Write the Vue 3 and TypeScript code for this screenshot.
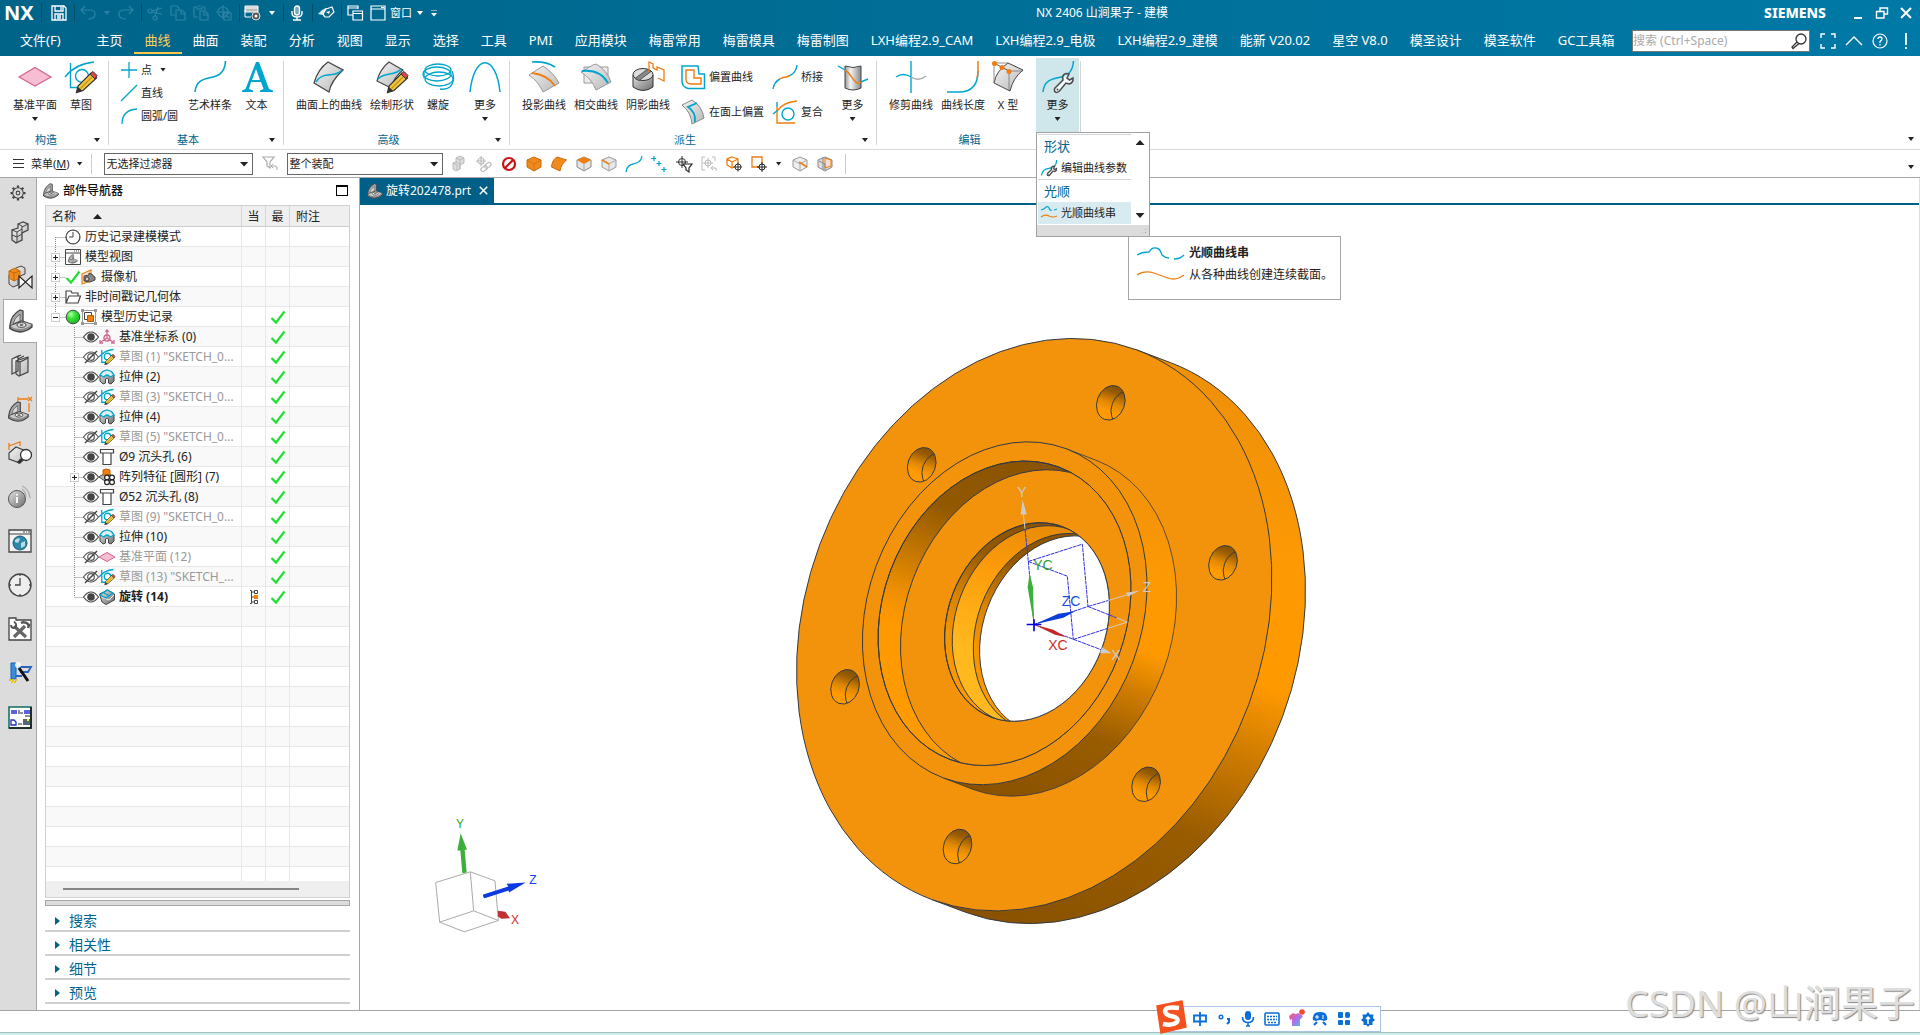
<script setup lang="ts">
import { ref } from 'vue'

interface Tool { icon: string; label: string; width: number; more?: boolean }
interface Row {
  level: number
  name: string
  icon: string
  state?: string
  expander?: '+' | '-'
  dim?: boolean
  bold?: boolean
  current?: boolean
  ok?: boolean
}

const tabs = ['主页', '曲线', '曲面', '装配', '分析', '视图', '显示', '选择', '工具', 'PMI', '应用模块', '梅雷常用', '梅雷模具', '梅雷制图', 'LXH编程2.9_CAM', 'LXH编程2.9_电极', 'LXH编程2.9_建模', '能新 V20.02', '星空 V8.0', '模圣设计', '模圣软件', 'GC工具箱']
const activeTab = ref('曲线')
const query = ref('')

const pencil = '<path d="M11.500 31.500L13 25L26 12L31.500 17L18 29.500Z" fill="#f2c53d" stroke="#333" stroke-width="1.200"/><path d="M15.500 27.500L28.500 14.500" stroke="#c8951c" stroke-width="1.500"/><path d="M25 13L28 10.500L32 14.500L30 18Z" fill="#e0474c" stroke="#333"/><path d="M11.500 31.500L13 26L17.500 30Z" fill="#333"/>'
const wrench = '<path d="M13 27L21 19Q19.500 14 24 12.500L27 13L25 17L27.500 19L31 17Q31.500 22 27 23L24 22L17 30.500Q14 32.500 12.500 30Q12 28.500 13 27Z" fill="#fff" fill-opacity=".7" stroke="#4a4a4a" stroke-width="1.500"/><circle cx="15.500" cy="28.500" r="1" fill="#4a4a4a"/>'
const sketch = '<path d="M0 16Q10 3 29 1M5.500 2V26.500H13" fill="none" stroke="#00a5cf" stroke-width="1.400"/><circle cx="17" cy="15" r="6.500" fill="none" stroke="#00a5cf" stroke-width="1.400"/>'
const sheet = '<path d="M15 1L30 9Q18 20 16 31L1 22Q5 8 15 1Z" fill="url(#metal)" stroke="#444" stroke-width="1.300"/>'
const bracket = '<path d="M1 16Q2 6 11 1L14 2V13L6 16L1 19Z" fill="#a8a8a8" stroke="#444" stroke-width="1.300"/><path d="M4 15Q5 9 11 5V12Z" fill="#d8d8d8" stroke="#666"/><path d="M1 17L13 12L23 15.500V18Q17 23 11 23Q4 22 1 19.500Z" fill="#8a8a8a" stroke="#444" stroke-width="1.300"/><path d="M1.500 17L13 12.500L22.500 15.500Q17 20 11 20Q5 20 1.500 17Z" fill="#c9c9c9"/><ellipse cx="12.500" cy="16" rx="4.500" ry="2.300" fill="#e8e8e8" stroke="#444"/><ellipse cx="12.500" cy="16" rx="2" ry="1" fill="#666"/>'
const cube = '<path d="M8 1L15 4V11L8 15L1 11V4Z"'

const icons: Record<string, [number, string]> = {
  save: [16, '<path d="M1 1H13L15 3V15H1ZM4 1V6H12V1M10 2V5M4 15V9H12V15M6 11H10M6 13H10" fill="none" stroke="#fff" stroke-width="1.300"/>'],
  undo: [16, '<path d="M5 1L1 5L5 9M1 5H10Q15 5 15 9Q15 13 10 14H8" fill="none" stroke="#2d83a4" stroke-width="1.200"/>'],
  redo: [16, '<path d="M11 1L15 5L11 9M15 5H6Q1 5 1 9Q1 13 6 14H8" fill="none" stroke="#2d83a4" stroke-width="1.200"/>'],
  cut: [16, '<g fill="none" stroke="#2d83a4" stroke-width="1.200"><circle cx="3" cy="6" r="2"/><circle cx="8" cy="13" r="2"/><path d="M5 7L15 9M8 11L11 2M5 6L15 3"/></g>'],
  copy: [16, '<g fill="none" stroke="#2d83a4" stroke-width="1.200"><path d="M5 10H1V1H7L9 3V5"/><path d="M6 5H12L15 8V15H6ZM11 5V9H15"/></g>'],
  paste: [16, '<g fill="none" stroke="#2d83a4" stroke-width="1.200"><path d="M5 12H1V2H4V4H9V2H12V5M5 1H8"/><path d="M7 6H12L15 9V15H7ZM11 6V10H15"/></g>'],
  target: [16, '<g fill="none" stroke="#2d83a4" stroke-width="1.200"><circle cx="7" cy="7" r="5"/><path d="M7 0V14M0 7H14M8 8H15V15H8ZM10 10L13 13"/></g>'],
  wingear: [16, '<path d="M0 1H13V7H0Z" fill="#bbb" stroke="#fff"/><path d="M0 3H13M0 5V12H6" stroke="#fff" fill="none"/><circle cx="11" cy="11" r="4" fill="#555" stroke="#ddd"/><circle cx="11" cy="11" r="1.500" fill="#fff"/>'],
  mic: [16, '<g fill="none" stroke="#fff" stroke-width="1.400"><rect x="5.500" y="1" width="5" height="9" rx="2.500" fill="#fff" fill-opacity=".45"/><path d="M3 6V8Q3 12 8 12Q13 12 13 8V6M8 12V15M4 15H12"/></g>'],
  hand: [16, '<path d="M0 9L4 5L8 3L11 5L9 9L6 12L5 10Z" fill="#fff" fill-opacity=".85"/><path d="M8 4L14 2L16 7L11 12H7L5 9Z" fill="#0a6a90" stroke="#fff" stroke-width="1.200"/><path d="M8 7L12 6L11 9Z" fill="#fff"/>'],
  windows: [16, '<g fill="none" stroke="#fff" stroke-width="1.200"><path d="M6 10H1V1H11V4M1 3H11M6 6H15.500V15H6ZM6 8.500H15.500"/></g>'],
  window: [16, '<path d="M1 1H15V15H1ZM1 4H15M11 2.500H14" fill="none" stroke="#fff" stroke-width="1.200"/>'],
  search: [16, '<g fill="none" stroke="#333" stroke-width="1.300"><circle cx="10" cy="6" r="5"/><path d="M6 9L1 14L2 15.500L8 10.500"/></g>'],
  full: [16, '<path d="M1 5V1H5M11 1H15V5M15 11V15H11M5 15H1V11" fill="none" stroke="#fff" stroke-width="1.400"/>'],
  up: [16, '<path d="M0 12L8 4L16 12" fill="none" stroke="#fff" stroke-width="1.400"/>'],
  help: [16, '<circle cx="8" cy="8" r="7" fill="none" stroke="#fff" stroke-width="1.200"/><path d="M6 6Q6 4 8 4T10 6Q10 7 8 8.500V10M8 11V12.500" fill="none" stroke="#fff" stroke-width="1.300"/>'],
  bang: [16, '<path d="M8 0V12M8 14V16" stroke="#fff" stroke-width="1.800"/>'],
  min: [12, '<path d="M2 11H10" stroke="#fff" stroke-width="2"/>'],
  restore: [12, '<path d="M4 4V1H11.500V7H8M0.500 4.500H8V11H0.500Z" fill="none" stroke="#fff" stroke-width="1.400"/>'],
  close: [12, '<path d="M1 1L11 11M11 1L1 11" stroke="#fff" stroke-width="2"/>'],

  plane: [32, '<path d="M0 16L16 6.500L32 16L16 25Z" fill="#f6bdd3" stroke="#d2648f" stroke-width="1.200"/>'],
  sketch: [32, sketch + pencil],
  point: [16, '<path d="M8 0V16M0 8H16" stroke="#00a5cf" stroke-width="1.300"/>'],
  line: [16, '<path d="M0 16L16 0" stroke="#00a5cf" stroke-width="1.300"/>'],
  arc: [16, '<path d="M1 16Q1 2 16 1" fill="none" stroke="#00a5cf" stroke-width="1.300"/>'],
  spline: [32, '<path d="M1 31C3 8 30 26 31.500 0" fill="none" stroke="#00a5cf" stroke-width="1.600"/>'],
  letter: [32, '<path d="M15 1H18L28 28L32 29.500V31H19V29.500L22.500 28L20 21H10L8 28L12 29.500V31H1V29.500L4.500 28ZM15 8L11 19H19Z" fill="#00a5cf"/>'],
  curveon: [32, sheet + '<path d="M3 21C10 9 22 18 29 9" fill="none" stroke="#00a5cf" stroke-width="1.500"/>'],
  shape: [32, '<path d="M13 1L27 9Q18 16 15 27L1 20Q4 8 13 1Z" fill="url(#metal)" stroke="#444" stroke-width="1.200"/><path d="M2 18C10 10 18 16 25 8" fill="none" stroke="#00a5cf" stroke-width="1.400"/>' + pencil],
  helix: [32, '<g fill="none" stroke="#00a5cf" stroke-width="1.300"><ellipse cx="16" cy="9" rx="13" ry="6"/><ellipse cx="15" cy="13" rx="14" ry="7"/><ellipse cx="17" cy="18" rx="14" ry="7"/><path d="M30 10Q34 20 28 26Q24 29 18 28M2 10V17"/></g>'],
  arch: [32, '<path d="M1 31C5 -8 27 -8 31 31" fill="none" stroke="#00a5cf" stroke-width="1.500"/>'],
  project: [32, '<path d="M15 5L1 14Q10 20 15 31L31 22Q26 12 15 5Z" fill="url(#metal)" stroke="#999"/><path d="M4 1Q18 0 27 6" fill="none" stroke="#00a5cf" stroke-width="1.600"/><path d="M4 12Q20 14 27 25" fill="none" stroke="#ef7d10" stroke-width="1.800"/>'],
  intersect: [32, '<path d="M4 6H28V22H4Z" fill="#eee" stroke="#999"/><path d="M13 4L1 11Q12 18 16 29L31 21Q27 9 16 3Z" fill="url(#metal)" stroke="#999"/><path d="M2 10Q20 8 28 22" fill="none" stroke="#00a5cf" stroke-width="1.800"/>'],
  shadow: [32, '<path d="M1 14V26Q11 33 21 26V14Z" fill="url(#metalDark)" stroke="#333"/><ellipse cx="11" cy="13.500" rx="10" ry="6" fill="#ddd" stroke="#333"/><path d="M3 17.500L15 8.500L19 10.500L7 19.500Z" fill="#888" stroke="#444" stroke-width=".8"/><path d="M17 11V1L21 3V7L25 9V6L32 9V20L26 17" fill="none" stroke="#ef7d10" stroke-width="1.300"/>'],
  offset: [24, '<path d="M1 1H17L18 9H23.500V23.500H7Q1 22 1 16Z" fill="none" stroke="#00a5cf" stroke-width="1.500"/><path d="M5 5H13V13H20V19H10Q5 19 5 14Z" fill="none" stroke="#ef7d10" stroke-width="1.400"/>'],
  faceoff: [24, '<path d="M1 5L11 0Q21 6 23 18L11 24Q10 12 1 5Z" fill="url(#metal)" stroke="#888"/><path d="M16 3L7 7Q15 12 14 22" fill="none" stroke="#00a5cf" stroke-width="1.800"/>'],
  bridge: [24, '<path d="M0 24Q1 17 7 14" fill="none" stroke="#00a5cf" stroke-width="1.400"/><path d="M7 14Q10 12 13 12Q15 11.500 17 10.500" fill="none" stroke="#ef7d10" stroke-width="1.400"/><path d="M17 10.500Q23 8 24 0" fill="none" stroke="#00a5cf" stroke-width="1.400"/>'],
  composite: [24, '<path d="M4 7V23H22" fill="none" stroke="#ef7d10" stroke-width="1.400"/><path d="M5 10Q11 2 24 1" fill="none" stroke="#ef7d10" stroke-width="1.400"/><path d="M4 2V7M0 14L5 10" stroke="#00a5cf" stroke-width="1.400"/><circle cx="15" cy="14" r="6" fill="none" stroke="#00a5cf" stroke-width="1.400"/>'],
  cylinder: [32, '<path d="M8 5V27Q16 31 24 27V5Q16 8 8 5Z" fill="url(#metalSide)" stroke="#444"/><path d="M1 5L8 9" stroke="#00a5cf" stroke-width="1.400"/><path d="M8 9C15 13 18 26 24 21" fill="none" stroke="#ef7d10" stroke-width="1.500"/><path d="M24 21L31 18" stroke="#00a5cf" stroke-width="1.400"/>'],
  trim: [32, '<path d="M16 0V32M1 16Q8 11 16 16" fill="none" stroke="#00a5cf" stroke-width="1.400"/><path d="M16 16Q24 21 31 15" fill="none" stroke="#aaa" stroke-width="1.400"/>'],
  length: [32, '<path d="M31 10Q31 31 12 31H0" fill="none" stroke="#00a5cf" stroke-width="1.500"/><path d="M31 0V10Q31 14 30 17" fill="none" stroke="#ef7d10" stroke-width="1.500"/>'],
  xform: [32, '<path d="M16 2L31 9Q21 17 18 30L2 22Q4 10 16 2Z" fill="url(#metal)" stroke="#444"/><path d="M2 2V22M17 10V29M17 10H31M2 2H16" fill="none" stroke="#777" stroke-width=".8"/><path d="M2 2L17 10" stroke="#555"/><circle cx="2.500" cy="2.500" r="2.500" fill="#ef7d10"/><circle cx="10" cy="6.500" r="2.500" fill="#ef7d10"/><circle cx="17" cy="10.500" r="2.500" fill="#ef7d10"/>'],
  curvewrench: [32, '<path d="M1 31C3 8 30 26 31.500 0" fill="none" stroke="#00a5cf" stroke-width="1.500"/>' + wrench],
  smooth: [16, '<path d="M0 5Q4 4 5 2Q7 1 8 3Q9 6 11 5M13 5L16 4" fill="none" stroke="#00a5cf" stroke-width="1.200"/><path d="M0 12Q4 9 8 11T16 11" fill="none" stroke="#ef7d10" stroke-width="1.200"/>'],

  filter: [16, '<path d="M1 1H12L8 6V12L5 10V6Z" fill="none" stroke="#aaa" stroke-width="1.200"/><path d="M11 8L9 10L11 12M9 10H13Q16 10 15 14" fill="none" stroke="#aaa"/>'],
  blocks: [16, '<path d="M5 2L9 0L13 2V7L9 9V13L5 15L2 13V7L5 6Z" fill="#ddd" stroke="#bbb"/><path d="M5 6L9 8V13M2 7L6 9V14M5 2L9 4L13 2M9 4V8" fill="none" stroke="#bbb"/>'],
  chain: [16, '<g fill="none" stroke="#bbb" stroke-width="1.200"><circle cx="5" cy="5" r="3"/><path d="M5 0V10M0 5H10"/><g transform="rotate(-40 10 11)"><rect x="4" y="9" width="7" height="4" rx="2"/><rect x="9" y="9" width="7" height="4" rx="2"/></g></g>'],
  no: [16, '<circle cx="8" cy="8" r="6" fill="#fff" stroke="#cc1010" stroke-width="2.200"/><path d="M4 12L12 4" stroke="#cc1010" stroke-width="2.200"/>'],
  solid: [16, cube + ' fill="#f08a1d" stroke="#c96a0a"/><path d="M1 4L8 8L15 4M8 8V15" fill="none" stroke="#d87410"/>'],
  face: [16, '<path d="M6 1L15.500 4Q10 8 9 15L.500 11Q1 4 6 1Z" fill="#f08a1d" stroke="#c96a0a"/>'],
  topface: [16, cube + ' fill="#e4e4e4" stroke="#888"/><path d="M8 1L15 4L8 8L1 4Z" fill="#ee7d12"/><path d="M8 8V15" stroke="#aaa"/>'],
  edge: [16, cube + ' fill="#e8e8e8" stroke="#999"/><path d="M8 8V15M8 8L15 4" stroke="#aaa"/><path d="M1 4L8 8" stroke="#ee7d12" stroke-width="1.500"/>'],
  curve: [16, '<path d="M0 16C2 3 14 12 16 0" fill="none" stroke="#00a5cf" stroke-width="1.300"/>'],
  points: [16, '<path d="M3 0V5M0 2.500H5M8 5V10M5.500 7.500H10.500M13 11V16M10.500 13.500H15.500" stroke="#00a5cf" stroke-width="1.200"/>'],
  snapfilter: [16, '<circle cx="6" cy="6" r="3.500" fill="none" stroke="#333"/><path d="M6 0V12M0 6H12" stroke="#333"/><path d="M7 8H16L13 12V16L10 14V12Z" fill="#fff" stroke="#222" stroke-width="1.200"/>'],
  snapoff: [16, '<g fill="none" stroke="#bbb"><path d="M4 1H1V14H4M11 1H14V5M12 10L10 12L12 14M10 12H15V15"/><circle cx="7" cy="7" r="3"/><path d="M7 2V12M2 7H12"/></g>'],
  cubesnap: [16, '<path d="M6 1L12 3V9L6 12L1 9V3ZM1 3L6 6L12 3M6 6V12" fill="none" stroke="#ef7d10" stroke-width="1.300"/><circle cx="12" cy="11" r="3" fill="#fff" stroke="#333"/><path d="M12 6.500V15.500M7.500 11H16" stroke="#333"/>'],
  boxsnap: [16, '<path d="M1 1H11V11H1Z" fill="none" stroke="#ef7d10" stroke-width="1.300"/><circle cx="11" cy="11" r="3" fill="#fff" stroke="#222"/><path d="M11 6V16M6 11H16" stroke="#222"/>'],
  seam: [16, cube + ' fill="#eee" stroke="#999"/><path d="M1 4L8 8L15 4M8 8V15" fill="none" stroke="#aaa"/><path d="M7 6L15 11" stroke="#ef7d10" stroke-width="1.500"/>'],
  section: [16, cube + ' fill="#ddd" stroke="#888"/><path d="M6 1V14" stroke="#888"/><path d="M8 2V12L14 10V4Z" fill="#f3e0cc" stroke="#ef7d10"/><path d="M2 5L8 8V14" fill="none" stroke="#888"/>'],

  gear: [24, '<g fill="none" stroke="#444" stroke-width="1.400"><circle cx="12" cy="12" r="7"/><circle cx="12" cy="12" r="2.500"/><path d="M12 2V5M12 19V22M2 12H5M19 12H22M4.900 4.900L7 7M17 17L19.100 19.100M19.100 4.900L17 7M7 17L4.900 19.100" stroke-width="3"/></g>'],
  assembly: [24, '<path d="M10 3L15 1L20 3V9L14 12V19L8 22L4 19V9L10 7Z" fill="url(#metal)" stroke="#444" stroke-width="1.300"/><path d="M4 9L9 11L14 8M14 6L20 3M9 11V22M4 14L9 16L14 13M10 3L14 5V12" fill="none" stroke="#444"/>'],
  constraint: [24, '<path d="M8 3L13 1L17 3V9L10 12V20L5 22L1 19V10Z" fill="url(#metal)" stroke="#444"/><path d="M1 6L7 3L12 6V13L6 16L1 13Z" fill="#ef8a1d" stroke="#c46808"/><path d="M1 6L6 8L12 6M6 8V16" fill="none" stroke="#c46808"/><path d="M11 11V23L24 11V23Z" fill="#fff" stroke="#222" stroke-width="1.200"/>'],
  part: [24, bracket],
  library: [24, '<path d="M4 6L10 3V18L4 21ZM4 6L13 2M10 6L16 3M8 8L20 4V19L11 23L8 21Z" fill="url(#metal)" stroke="#444" stroke-width="1.200"/><path d="M8 8L12 9L20 5M12 9V22" fill="none" stroke="#444" stroke-width="1.200"/>'],
  dims: [24, '<g transform="translate(0 4) scale(.88)">' + bracket + '</g><path d="M10 2H20M10 0V4M20 0L24 4M24 0L20 4M21 6V15" stroke="#ef7d10" stroke-width="1.300"/>'],
  inspect: [24, '<path d="M1 12L8 6L23 12L12 22L1 18Z" fill="url(#metal)" stroke="#444" stroke-width="1.200"/><path d="M1 2V9M1 5L12 1V5" fill="none" stroke="#ef7d10" stroke-width="1.300"/><circle cx="18" cy="14" r="5.500" fill="#fff" stroke="#333" stroke-width="1.300"/><path d="M14 18L10 22" stroke="#333" stroke-width="3"/>'],
  info: [24, '<circle cx="9" cy="14" r="8.500" fill="url(#metalDark)" stroke="#555"/><path d="M9 12V18M9 9V10.500" stroke="#fff" stroke-width="1.800"/><path d="M14 4Q18 7 18 12M14 1Q21 4 22 13" fill="none" stroke="#aaa" stroke-width="1.300"/>'],
  web: [24, '<path d="M1 1H23V23H1Z" fill="#f4f4f4" stroke="#444" stroke-width="1.300"/><path d="M1 5H23" stroke="#444"/><path d="M15 3H17M18 3H19M20 3H22" stroke="#444"/><circle cx="12" cy="14" r="7" fill="#2f87a8" stroke="#1b5d78"/><path d="M7 11Q10 8 12 10L10 14L7 13ZM13 14L17 12V17L13 19Z" fill="#b8dde8"/>'],
  clock: [24, '<circle cx="12" cy="12" r="11" fill="#eee" stroke="#444" stroke-width="1.400"/><path d="M12 5V12H7M12 1V3M12 21V23M1 12H3M21 12H23" fill="none" stroke="#444" stroke-width="1.300"/>'],
  tools: [24, '<path d="M2 1H8V3H23V23H1V1Z" fill="#fff" stroke="#444" stroke-width="1.300"/><path d="M6 9L18 20M17 9L6 20" stroke="#666" stroke-width="3.200"/><path d="M3 8Q3 11 6 11Q9 10 8 7L6 4.500" fill="none" stroke="#555" stroke-width="1.800"/><path d="M13 6Q17 4 21 8L20 11" fill="none" stroke="#555" stroke-width="2.500"/>'],
  wizard: [24, '<path d="M3 2H8V18H3Z" fill="#3a8fd8" stroke="#1a5eb0"/><path d="M10 6H23L20 11H12M8 15H14" fill="none" stroke="#2a62c0" stroke-width="1.800"/><path d="M11 7L20 20" stroke="#111" stroke-width="3"/><circle cx="10" cy="4" r="3" fill="#fff" fill-opacity=".8"/><path d="M1 19H10M3 21H8" stroke="#e8c020" stroke-width="1.800" stroke-dasharray="2 1"/>'],
  flow: [24, '<path d="M1 2H23V23H1Z" fill="#fff" stroke="#0d6b62" stroke-width="1.500"/><path d="M23 2V23H1" fill="none" stroke="#111" stroke-width="1.500"/><path d="M3 5H9V9H3ZM16 5H22V9H16Z" fill="#5a63e0"/><path d="M3 15H6L8 17V20H3Z" fill="#fff" stroke="#2030c0" stroke-width="1.300"/><path d="M15 14H22V20H15Z" fill="#567"/><path d="M19 14H21V16H19Z" fill="#ee3"/><path d="M10 6H12M10 8H15M10 19H14M17 11H22" stroke="#222"/>'],

  tclock: [16, '<circle cx="8" cy="8" r="7" fill="#fff" stroke="#444" stroke-width="1.200"/><path d="M8 3V8H4M8 1V2M8 14V15M14 8H15M1 8H2" fill="none" stroke="#444"/>'],
  tview: [16, '<path d="M.500 .500H15.500V15.500H.500ZM.500 4H15.500" fill="#fff" stroke="#444"/><path d="M9 2H10M11 2H12M13 2H14" stroke="#444"/><g transform="translate(3 5) scale(.4)">' + bracket + '</g>'],
  tcamera: [16, '<path d="M1 5L10 1V12L1 15Z" fill="#f8e4cc" stroke="#ef7d10" stroke-width="1.200"/><path d="M3 7L8 6V4L12 6V7L14 8V11L9 13L3 12Z" fill="#888" stroke="#444"/><circle cx="6" cy="10" r="2" fill="#ccc" stroke="#444"/>'],
  tfolder: [16, '<path d="M1 14V2H6L7 4H13V7M1 14L4 7H15.500L13 14Z" fill="#fff" stroke="#444" stroke-width="1.200"/>'],
  thistory: [16, '<path d="M3 1.500H13M3 14.500H13M1.500 3V13M14.500 3V13" stroke="#999"/><path d="M0 0H3V3H0ZM13 0H16V3H13ZM0 13H3V16H0ZM13 13H16V16H13Z" fill="#999"/><path d="M3.500 3.500H10.500V10.500H3.500Z" fill="#fff" stroke="#444"/><path d="M6.500 6.500H12.500V12.500H6.500Z" fill="#ef8010" stroke="#b85c00"/>'],
  tcsys: [16, '<g fill="none" stroke="#d2648f" stroke-width="1.300"><path d="M8 1V9L2 13M8 9L14 13"/><circle cx="8" cy="9" r="3"/><path d="M6.500 3L8 1L9.500 3M1 11V14H4M15 11V14H12"/></g>'],
  tsketch: [32, sketch.split('1.400').join('2.600') + pencil],
  textrude: [16, '<path d="M1 6V12L4 15L6.500 14V10Q8 8 9.500 10V14L12 15L15 12V6L12 3H4Z" fill="url(#metalDark)" stroke="#444"/><path d="M1 6L3.500 2.500L8 1L12.500 2.500L15 6L11 8Q8 4 5 8Z" fill="#dff0f4" stroke="#00a5cf" stroke-width="1.300"/>'],
  thole: [16, '<path d="M1.500 .500H14.500V4H12V15.500H4V4H1.500ZM4 4H12" fill="#fff" stroke="#444" stroke-width="1.200"/>'],
  tpattern: [16, '<path d="M0 8Q4 4 12 6L15 9L9 14Z" fill="#bbb" stroke="#444"/><path d="M4 1Q7.500 -1 11 1V6H4Z" fill="#ef8010" stroke="#b85c00"/><g fill="#fff" stroke="#222" stroke-width="1.200"><circle cx="8" cy="8.500" r="2.400"/><circle cx="13" cy="8.500" r="2.400"/><circle cx="8" cy="13.300" r="2.400"/><circle cx="13" cy="13.300" r="2.400"/></g>'],
  tplane: [16, '<path d="M0 8L8 3.500L16 8L8 12.500Z" fill="#f6bdd3" stroke="#d2648f"/>'],
  trevolve: [16, '<path d="M.500 5L9 1L15.500 5V11L7 15.500L3 13Z" fill="url(#metalDark)" stroke="#444"/><path d="M3 8L10 11L15 6" fill="none" stroke="#eee"/><path d="M1 6L8 1L14 4L7 9ZM5 4L11 7" fill="none" stroke="#00a5cf" stroke-width="1.200"/>'],
  eye: [16, '<path d="M.500 8Q8 -2 15.500 8Q8 18 .500 8Z" fill="#fff" stroke="#444" stroke-width="1.200"/><circle cx="8" cy="8" r="3.800" fill="#444"/>'],
  eyeoff: [16, '<path d="M.500 8Q8 -2 15.500 8Q8 18 .500 8Z" fill="#fff" stroke="#555" stroke-width="1.200"/><circle cx="8" cy="8" r="3.300" fill="none" stroke="#555" stroke-width="1.200"/><path d="M2 14L14 2" stroke="#444" stroke-width="1.400"/>'],
  ok: [16, '<path d="M1.500 9L6 13.500L14.500 2.500" fill="none" stroke="#22dd33" stroke-width="2.200"/>'],
  ball: [16, '<circle cx="8" cy="8" r="6.800" fill="url(#ball)" stroke="#444"/>'],
  current: [16, '<path d="M5.500 1.500V14.500M5.500 3H8M5.500 8H8M5.500 13H8M5.500 1.500H4M5.500 14.500H4" stroke="#444" fill="none"/><path d="M8.500 1.500H11.500V4.500H8.500ZM8.500 11.500H11.500V14.500H8.500Z" fill="#fff" stroke="#444"/><path d="M8 6H12V10H8Z" fill="#ef8010"/>'],

  zh: [16, '<path d="M2 4.500H14V10.500H2ZM8 1V15" fill="none" stroke="#0a6fd6" stroke-width="1.800"/>'],
  punct: [16, '<circle cx="5" cy="6" r="1.800" fill="none" stroke="#0a6fd6" stroke-width="1.400"/><path d="M11 8H13V11L11 13" fill="none" stroke="#0a6fd6" stroke-width="2"/>'],
  imemic: [16, '<rect x="5" y="0" width="6" height="9" rx="3" fill="#0a6fd6"/><path d="M2.500 6Q2.500 11.500 8 11.500T13.500 6M8 12V15M6 15H10" fill="none" stroke="#0a6fd6" stroke-width="1.600"/>'],
  keys: [16, '<rect x="1" y="2" width="14" height="12" rx="1" fill="none" stroke="#0a6fd6" stroke-width="1.600"/><path d="M3 5.500H13M3 8.500H13M4 11.500H12" stroke="#0a6fd6" stroke-width="1.700" stroke-dasharray="2 1"/>'],
  shirt: [16, '<path d="M1 5L5 2Q8 4 10 2L15 5L13 8L12 8V15H4V8L2 9Z" fill="url(#shirt)"/><circle cx="14" cy="1" r="2.800" fill="#f5492e"/>'],
  game: [16, '<path d="M3 2Q8 0 13 2Q16 5 15 9L12 10Q8 8 4 10L1 9Q0 5 3 2Z" fill="#0a6fd6"/><path d="M5 4V8M3 6H7M10 5H12M10 7H12" stroke="#fff"/><path d="M2 14L5 11M14 14L11 11" stroke="#0a6fd6" stroke-width="2.200"/>'],
  grid: [16, '<g fill="#0a6fd6"><rect x="2" y="1" width="5" height="6" rx="1"/><rect x="9" y="1" width="5" height="6" rx="2"/><rect x="2" y="9" width="5" height="5" rx="1"/><rect x="9" y="9" width="5" height="5" rx="1"/></g>'],
  imegear: [16, '<path d="M8 1L10 3.500H13.500L13 7L15 9L12.500 11V14H9.500L8 16L6.500 14H3.500V11L1 9L3 7L2.500 3.500H6Z" fill="#0a6fd6"/><path d="M8 6V13M6 8L8 6L10 8" stroke="#fff" stroke-width="1.500" fill="none"/>'],
  sogou: [32, '<path d="M2 5L27 0L31 26L6 32Z" fill="#f4511e" stroke="#f4511e" stroke-width="1.500" stroke-linejoin="round"/><path d="M24 7Q10 5 10 10.500Q11 14.500 18 15.500Q24 17 22 21Q18 25 8 23" fill="none" stroke="#fff" stroke-width="4.500"/>'],
}

const quick = ['save', '|', 'undo', 'dim', 'redo', '|', 'cut', 'copy', 'paste', 'target', '|', 'wingear', 'v', '|', 'mic', '|', 'hand', '|', 'windows', 'window']

const baseTools: Tool[] = [
  { icon: 'plane', label: '基准平面', width: 54, more: true },
  { icon: 'sketch', label: '草图', width: 38 },
]
const basicList = [
  { icon: 'point', label: '点', more: true },
  { icon: 'line', label: '直线', more: false },
  { icon: 'arc', label: '圆弧/圆', more: false },
]
const basicTools: Tool[] = [
  { icon: 'spline', label: '艺术样条', width: 54 },
  { icon: 'letter', label: '文本', width: 39 },
]
const advTools: Tool[] = [
  { icon: 'curveon', label: '曲面上的曲线', width: 78 },
  { icon: 'shape', label: '绘制形状', width: 48 },
  { icon: 'helix', label: '螺旋', width: 44 },
  { icon: 'arch', label: '更多', width: 50, more: true },
]
const deriveTools: Tool[] = [
  { icon: 'project', label: '投影曲线', width: 52 },
  { icon: 'intersect', label: '相交曲线', width: 52 },
  { icon: 'shadow', label: '阴影曲线', width: 52 },
]
const editTools: Tool[] = [
  { icon: 'trim', label: '修剪曲线', width: 52 },
  { icon: 'length', label: '曲线长度', width: 52 },
  { icon: 'xform', label: 'X 型', width: 38 },
]

const selectTools = ['blocks', 'chain', 'no', 'solid', 'face', 'topface', 'edge', 'curve', 'points', 'snapfilter', 'snapoff', 'cubesnap', 'boxsnap']
const rail = ['gear', 'assembly', 'constraint', 'part', 'library', 'dims', 'inspect', 'info', 'web', 'clock', 'tools', 'wizard', 'flow']
const ime = ['zh', 'punct', 'imemic', 'keys', 'shirt', 'game', 'grid', 'imegear']
const sections = ['搜索', '相关性', '细节', '预览']

const rows: Row[] = [
  { level: 0, name: '历史记录建模模式', icon: 'tclock' },
  { level: 0, name: '模型视图', icon: 'tview', expander: '+' },
  { level: 0, name: '摄像机', icon: 'tcamera', state: 'ok', expander: '+' },
  { level: 0, name: '非时间戳记几何体', icon: 'tfolder', expander: '+' },
  { level: 0, name: '模型历史记录', icon: 'thistory', state: 'ball', expander: '-', ok: true },
  { level: 1, name: '基准坐标系 (0)', icon: 'tcsys', state: 'eye', ok: true },
  { level: 1, name: '草图 (1) "SKETCH_0...', icon: 'tsketch', state: 'eyeoff', dim: true, ok: true },
  { level: 1, name: '拉伸 (2)', icon: 'textrude', state: 'eye', ok: true },
  { level: 1, name: '草图 (3) "SKETCH_0...', icon: 'tsketch', state: 'eyeoff', dim: true, ok: true },
  { level: 1, name: '拉伸 (4)', icon: 'textrude', state: 'eye', ok: true },
  { level: 1, name: '草图 (5) "SKETCH_0...', icon: 'tsketch', state: 'eyeoff', dim: true, ok: true },
  { level: 1, name: 'Ø9 沉头孔 (6)', icon: 'thole', state: 'eye', ok: true },
  { level: 1, name: '阵列特征 [圆形] (7)', icon: 'tpattern', state: 'eye', expander: '+', ok: true },
  { level: 1, name: 'Ø52 沉头孔 (8)', icon: 'thole', state: 'eye', ok: true },
  { level: 1, name: '草图 (9) "SKETCH_0...', icon: 'tsketch', state: 'eyeoff', dim: true, ok: true },
  { level: 1, name: '拉伸 (10)', icon: 'textrude', state: 'eye', ok: true },
  { level: 1, name: '基准平面 (12)', icon: 'tplane', state: 'eyeoff', dim: true, ok: true },
  { level: 1, name: '草图 (13) "SKETCH_...', icon: 'tsketch', state: 'eyeoff', dim: true, ok: true },
  { level: 1, name: '旋转 (14)', icon: 'trevolve', state: 'eye', bold: true, current: true, ok: true },
]
const emptyRows = 14

// Dotted connector lines of one tree row.
function guide(i: number): string {
  const r = rows[i]
  const x = r.level ? 28.5 : 9.5
  const top = i === 0 ? 10 : 0
  const last = i === 4 || i === rows.length - 1
  return `M${x} ${top}V${last ? 10 : 20}M${x} 10.5H${r.level ? 38 : 20}`
}

// Every circle of the part lies across one shared axis, so they project to similar ellipses.
const TILT = 20.4
const RATIO = 0.7805
const ux = Math.cos((TILT * Math.PI) / 180)
const uy = Math.sin((TILT * Math.PI) / 180)
function ring(cx: number, cy: number, r: number): string {
  const x1 = cx + uy * r, y1 = cy - ux * r, x2 = cx - uy * r, y2 = cy + ux * r
  return `M${x1} ${y1}A${r * RATIO} ${r} ${TILT} 0 1 ${x2} ${y2}A${r * RATIO} ${r} ${TILT} 0 1 ${x1} ${y1}Z`
}
function barrel(cx: number, cy: number, r: number, dx: number, dy: number): string {
  const tx = cx + uy * r, ty = cy - ux * r, bx = cx - uy * r, by = cy + ux * r
  return `M${tx} ${ty}L${tx + dx} ${ty + dy}A${r * RATIO} ${r} ${TILT} 0 1 ${bx + dx} ${by + dy}L${bx} ${by}`
}
const holes = [[1110.8, 402.3], [921.7, 464.3], [1223, 562.3], [845.1, 686.3], [1146.1, 783.8], [957.5, 846]]
</script>

<template>
  <div class="app">
    <svg class="defs" aria-hidden="true">
      <defs>
        <linearGradient id="metal" x1="0" y1="0" x2="1" y2="1"><stop offset="0" stop-color="#f4f4f4" /><stop offset="1" stop-color="#b8b8b8" /></linearGradient>
        <linearGradient id="metalDark" x1="0" y1="0" x2="1" y2="1"><stop offset="0" stop-color="#e2e2e2" /><stop offset="1" stop-color="#6e6e6e" /></linearGradient>
        <linearGradient id="metalSide" x1="0" y1="0" x2="1" y2="0"><stop offset="0" stop-color="#999" /><stop offset=".35" stop-color="#f4f4f4" /><stop offset="1" stop-color="#888" /></linearGradient>
        <radialGradient id="ball" cx=".35" cy=".3" r=".8"><stop offset="0" stop-color="#b6ffb0" /><stop offset=".4" stop-color="#35e435" /><stop offset="1" stop-color="#14b020" /></radialGradient>
        <linearGradient id="shirt" x1="0" y1="0" x2="1" y2="1"><stop offset="0" stop-color="#ff5a5a" /><stop offset=".5" stop-color="#b06cf0" /><stop offset="1" stop-color="#38d0f0" /></linearGradient>
      </defs>
    </svg>

    <header class="head">
      <div class="titlebar">
        <span class="brand">NX</span>
        <i class="qsep first"></i>
        <template v-for="(q, i) in quick" :key="i">
          <i v-if="q === '|'" class="qsep"></i>
          <i v-else-if="q === 'v' || q === 'dim'" class="caret light" :class="{ faded: q === 'dim' }"></i>
          <button v-else class="ico" :aria-label="q"><svg width="16" height="16" viewBox="0 0 16 16" v-html="icons[q][1]" /></button>
        </template>
        <button class="winbtn">窗口<i class="caret light"></i></button>
        <i class="caret light lined"></i>
        <h1>NX 2406 山涧果子 - 建模</h1>
        <span class="maker">SIEMENS</span>
        <button v-for="w in ['min', 'restore', 'close']" :key="w" class="ico win" :aria-label="w"><svg width="12" height="12" viewBox="0 0 12 12" v-html="icons[w][1]" /></button>
      </div>
      <nav class="tabs">
        <button class="file">文件(F)</button>
        <button v-for="t in tabs" :key="t" :class="{ on: t === activeTab }" @click="activeTab = t">{{ t }}</button>
        <div class="right">
          <div class="search">
            <input v-model="query" type="text" aria-label="搜索" placeholder="搜索 (Ctrl+Space)" />
            <svg width="16" height="16" viewBox="0 0 16 16" v-html="icons.search[1]" />
          </div>
          <button v-for="w in ['full', 'up', 'help', 'bang']" :key="w" class="ico" :aria-label="w"><svg width="16" height="16" viewBox="0 0 16 16" v-html="icons[w][1]" /></button>
        </div>
      </nav>
    </header>

    <section class="ribbon">
      <div class="group g1">
        <div class="body">
          <button v-for="t in baseTools" :key="t.label" class="tool" :style="{ width: t.width + 'px' }">
            <svg width="32" height="32" viewBox="0 0 32 32" v-html="icons[t.icon][1]" /><span>{{ t.label }}</span><i v-if="t.more" class="caret"></i>
          </button>
        </div>
        <div class="gname">构造<i class="caret"></i></div>
      </div>
      <i class="gsep"></i>
      <div class="group g2">
        <div class="body">
          <div class="list small">
            <button v-for="t in basicList" :key="t.label"><svg width="16" height="16" viewBox="0 0 16 16" v-html="icons[t.icon][1]" />{{ t.label }}<i v-if="t.more" class="caret"></i></button>
          </div>
          <button v-for="t in basicTools" :key="t.label" class="tool" :style="{ width: t.width + 'px' }">
            <svg width="32" height="32" viewBox="0 0 32 32" v-html="icons[t.icon][1]" /><span>{{ t.label }}</span>
          </button>
        </div>
        <div class="gname">基本<i class="caret"></i></div>
      </div>
      <i class="gsep"></i>
      <div class="group g3">
        <div class="body">
          <button v-for="t in advTools" :key="t.label" class="tool" :style="{ width: t.width + 'px' }">
            <svg width="32" height="32" viewBox="0 0 32 32" v-html="icons[t.icon][1]" /><span>{{ t.label }}</span><i v-if="t.more" class="caret"></i>
          </button>
        </div>
        <div class="gname">高级<i class="caret"></i></div>
      </div>
      <i class="gsep"></i>
      <div class="group g4">
        <div class="body">
          <button v-for="t in deriveTools" :key="t.label" class="tool" :style="{ width: t.width + 'px' }">
            <svg width="32" height="32" viewBox="0 0 32 32" v-html="icons[t.icon][1]" /><span>{{ t.label }}</span>
          </button>
          <div class="list wide">
            <button><svg width="24" height="24" viewBox="0 0 24 24" v-html="icons.offset[1]" />偏置曲线</button>
            <button><svg width="24" height="24" viewBox="0 0 24 24" v-html="icons.faceoff[1]" />在面上偏置</button>
          </div>
          <div class="list narrow">
            <button><svg width="24" height="24" viewBox="0 0 24 24" v-html="icons.bridge[1]" />桥接</button>
            <button><svg width="24" height="24" viewBox="0 0 24 24" v-html="icons.composite[1]" />复合</button>
          </div>
          <button class="tool more"><svg width="32" height="32" viewBox="0 0 32 32" v-html="icons.cylinder[1]" /><span>更多</span><i class="caret"></i></button>
        </div>
        <div class="gname">派生<i class="caret"></i></div>
      </div>
      <i class="gsep"></i>
      <div class="group g5">
        <div class="body">
          <button v-for="t in editTools" :key="t.label" class="tool" :style="{ width: t.width + 'px' }">
            <svg width="32" height="32" viewBox="0 0 32 32" v-html="icons[t.icon][1]" /><span>{{ t.label }}</span>
          </button>
          <div class="opened">
            <button class="tool more" aria-expanded="true"><svg width="32" height="32" viewBox="0 0 32 32" v-html="icons.curvewrench[1]" /><span>更多</span><i class="caret"></i></button>
            <div class="menu">
              <div class="menubody">
                <div class="items">
                  <h2>形状</h2>
                  <button><svg width="16" height="16" viewBox="0 0 32 32" v-html="icons.curvewrench[1].split('1.500&quot;').join('2.500&quot;')" />编辑曲线参数</button>
                  <h2>光顺</h2>
                  <button class="hot"><svg width="16" height="16" viewBox="0 0 16 16" v-html="icons.smooth[1]" />光顺曲线串</button>
                </div>
                <div class="scroll"><i class="caret big flip"></i><i class="caret big"></i></div>
              </div>
              <div class="grip"></div>
              <div class="tip" role="tooltip">
                <svg width="48" height="36" viewBox="0 0 48 36">
                  <path d="M0 10Q5 7 12 7Q15 2 19 3Q23 3 25 10Q28 13 32 13M37 14Q43 14 47 10" fill="none" stroke="#00a5cf" stroke-width="1.300" />
                  <path d="M0 30Q7 25 17 28Q25 31 31 33Q39 36 47 30" fill="none" stroke="#ef7d10" stroke-width="1.300" />
                </svg>
                <div><b>光顺曲线串</b><p>从各种曲线创建连续截面。</p></div>
              </div>
            </div>
          </div>
        </div>
        <div class="gname">编辑</div>
      </div>
      <i class="gsep"></i>
      <i class="caret corner"></i>
    </section>

    <section class="bar">
      <button class="menubtn"><svg width="11" height="11" viewBox="0 0 11 11"><path d="M0 1.500H11M0 5.500H11M0 9.500H11" stroke="#333" /></svg><span>菜单(<u>M</u>)</span><i class="caret"></i></button>
      <i class="bsep"></i>
      <label class="pick p1"><select aria-label="选择过滤器"><option>无选择过滤器</option></select><i class="caret big"></i></label>
      <button class="ico" aria-label="filter"><svg width="16" height="16" viewBox="0 0 16 16" v-html="icons.filter[1]" /></button>
      <label class="pick p2"><select aria-label="选择范围"><option>整个装配</option></select><i class="caret big"></i></label>
      <button v-for="t in selectTools" :key="t" class="ico" :aria-label="t"><svg width="16" height="16" viewBox="0 0 16 16" v-html="icons[t][1]" /></button>
      <i class="caret"></i>
      <button class="ico gap" aria-label="seam"><svg width="16" height="16" viewBox="0 0 16 16" v-html="icons.seam[1]" /></button>
      <button class="ico" aria-label="section"><svg width="16" height="16" viewBox="0 0 16 16" v-html="icons.section[1]" /></button>
      <i class="bsep end"></i>
      <i class="caret corner"></i>
    </section>

    <main class="main">
      <nav class="rail">
        <button v-for="r in rail" :key="r" :class="{ on: r === 'part' }" :aria-label="r"><svg :width="r === 'gear' ? 18 : 24" :height="r === 'gear' ? 18 : 24" viewBox="0 0 24 24" v-html="icons[r][1]" /></button>
      </nav>

      <aside class="panel">
        <div class="ptitle"><svg width="16" height="16" viewBox="0 0 24 24" v-html="icons.part[1]" />部件导航器<button class="max" aria-label="最大化"></button></div>
        <div class="treebox">
          <div class="treeclip">
            <table class="tree">
              <colgroup><col class="c1" /><col class="c2" /><col class="c2" /><col /></colgroup>
              <thead><tr><th>名称<i class="caret big flip"></i></th><th class="mid">当</th><th class="mid">最</th><th>附注</th></tr></thead>
              <tbody>
                <tr v-for="(r, i) in rows" :key="i">
                  <td>
                    <div class="node" :class="{ dim: r.dim, bold: r.bold }">
                      <svg :width="r.level ? 37 : 19" height="20">
                        <path :d="guide(i)" fill="none" stroke="#888" stroke-dasharray="1 1" />
                        <g v-if="r.expander" :transform="r.level ? 'translate(24 6)' : 'translate(5 6)'">
                          <rect x=".5" y=".5" width="8" height="8" fill="#fff" stroke="#ccc" />
                          <path :d="r.expander === '+' ? 'M2 4.500H7M4.500 2V7' : 'M2 4.500H7'" stroke="#222" />
                        </g>
                      </svg>
                      <svg v-if="r.state" width="16" height="16" viewBox="0 0 16 16" v-html="icons[r.state][1]" />
                      <svg width="16" height="16" :viewBox="`0 0 ${icons[r.icon][0]} ${icons[r.icon][0]}`" v-html="icons[r.icon][1]" />
                      <span>{{ r.name }}</span>
                    </div>
                  </td>
                  <td class="mid"><svg v-if="r.current" width="16" height="16" viewBox="0 0 16 16" v-html="icons.current[1]" /></td>
                  <td class="mid"><svg v-if="r.ok" width="16" height="16" viewBox="0 0 16 16" v-html="icons.ok[1]" /></td>
                  <td></td>
                </tr>
                <tr v-for="n in emptyRows" :key="'e' + n"><td></td><td></td><td></td><td></td></tr>
              </tbody>
            </table>
          </div>
          <div class="hscroll"><i></i></div>
        </div>
        <div class="split"></div>
        <button v-for="s in sections" :key="s" class="sect"><i></i>{{ s }}</button>
      </aside>

      <section class="work">
        <div class="doctabs">
          <button class="doc"><svg width="16" height="16" viewBox="0 0 24 24" v-html="icons.part[1]" />旋转202478.prt<svg class="x" width="9" height="9" viewBox="0 0 12 12" v-html="icons.close[1]" /></button>
        </div>
        <svg class="scene" viewBox="360 205 1559 804">
          <defs>
            <linearGradient id="side" gradientUnits="userSpaceOnUse" x1="1170" y1="362" x2="966" y2="912">
              <stop offset="0" stop-color="#ee9008" /><stop offset=".25" stop-color="#fd9903" /><stop offset=".46" stop-color="#ff9900" /><stop offset=".58" stop-color="#cf7c00" /><stop offset=".74" stop-color="#995c00" /><stop offset="1" stop-color="#8a5200" />
            </linearGradient>
            <linearGradient id="boss" gradientUnits="userSpaceOnUse" x1="1095" y1="460" x2="973" y2="789">
              <stop offset="0" stop-color="#f09109" /><stop offset=".25" stop-color="#fd9903" /><stop offset=".46" stop-color="#ff9900" /><stop offset=".58" stop-color="#cf7c00" /><stop offset=".74" stop-color="#995c00" /><stop offset="1" stop-color="#8a5200" />
            </linearGradient>
            <linearGradient id="wall" gradientUnits="userSpaceOnUse" x1="1059" y1="467" x2="950" y2="759">
              <stop offset="0" stop-color="#8a5300" /><stop offset=".25" stop-color="#935900" /><stop offset=".42" stop-color="#c57700" /><stop offset=".56" stop-color="#f09000" /><stop offset=".66" stop-color="#ff9900" /><stop offset="1" stop-color="#ff9a00" />
            </linearGradient>
            <linearGradient id="bore" gradientUnits="userSpaceOnUse" x1="1063" y1="526" x2="992" y2="716">
              <stop offset="0" stop-color="#8a5300" /><stop offset=".25" stop-color="#935900" /><stop offset=".5" stop-color="#d98300" /><stop offset=".7" stop-color="#f59400" /><stop offset="1" stop-color="#ff9a00" />
            </linearGradient>
            <linearGradient id="groove" gradientUnits="userSpaceOnUse" x1="1063" y1="526" x2="992" y2="716">
              <stop offset="0" stop-color="#e68a05" /><stop offset=".3" stop-color="#fb9a0a" /><stop offset=".55" stop-color="#ffad16" /><stop offset=".75" stop-color="#ffb91f" /><stop offset="1" stop-color="#ffb91f" />
            </linearGradient>
            <linearGradient id="drill" x1=".65" y1="0" x2=".35" y2="1">
              <stop offset="0" stop-color="#855000" /><stop offset=".2" stop-color="#995c00" /><stop offset=".5" stop-color="#e08800" /><stop offset=".75" stop-color="#ff9a00" /><stop offset="1" stop-color="#ff9a00" />
            </linearGradient>
            <clipPath id="cutRecess"><path :d="ring(1004.5, 612.8, 156)" /></clipPath>
            <clipPath id="cutBore"><path :d="ring(1027, 621.5, 101.7)" /></clipPath>
            <clipPath id="cutHole"><path :d="ring(0, 0, 17.7)" /></clipPath>
          </defs>
          <g stroke="#333a45" stroke-width="1" fill="none">
            <path :d="barrel(1034.2, 624.2, 293.3, 33.7, 12.7)" fill="url(#side)" />
            <path :d="ring(1034.2, 624.2, 293.3)" fill="#f2930b" />
            <g v-for="(h, i) in holes" :key="i" :transform="`translate(${h[0]} ${h[1]})`">
              <path :d="ring(0, 0, 17.7)" fill="url(#drill)" />
              <path :d="ring(14.500, 5.500, 17.7)" clip-path="url(#cutHole)" />
            </g>
            <path :d="barrel(1004.7, 612.8, 175.7, 29.5, 11.4)" fill="url(#boss)" stroke-width=".8" />
            <path :d="ring(1004.7, 612.8, 175.7)" fill="#f2930b" />
            <path :d="ring(1004.5, 612.8, 156)" fill="url(#wall)" />
            <path :d="ring(1026.9, 621.5, 156)" fill="#f2930b" clip-path="url(#cutRecess)" />
            <path :d="ring(1027, 621.5, 101.7)" fill="url(#bore)" />
            <g clip-path="url(#cutBore)">
              <path :d="ring(1034.6, 624.4, 101.7)" fill="url(#groove)" />
              <path :d="ring(1055.7, 632.2, 101.7)" fill="url(#bore)" />
              <path :d="ring(1062, 634.6, 101.7)" fill="#fff" />
            </g>
            <path :d="ring(1027, 621.5, 101.7)" />
            <path :d="ring(1004.5, 612.8, 156)" />
          </g>

          <g transform="translate(930 440) scale(.33333)" fill="none" stroke-width="3">
            <path d="M285 265L295 363L312 552M295 363L457 311L474 498L312 552M295 363L412 407L430 597M474 498L560 532M474 498L535 480M430 597L535 563M312 552L520 630" stroke="#3030e0" stroke-dasharray="12 2" />
            <path d="M280 222L285 265M535 480L592 463M560 532L592 545L535 563" stroke="#ccc" />
            <path d="M272 222L278 178L290 222ZM588 457L630 450L594 468ZM516 620L545 638L510 638Z" fill="#ccc" />
            <path d="M312 552L293 440L299 398L309 440Z" fill="#3cae3c" />
            <path d="M312 552L385 520L436 512L400 532Z" fill="#0a3ed8" />
            <path d="M312 552L370 568L410 590L375 583Z" fill="#c22a2a" />
            <path d="M290 552H334M312 536V572" stroke="#0000e0" stroke-width="5" />
          </g>
          <g class="axis" text-anchor="middle">
            <text x="1022" y="496" fill="#ccc">Y</text>
            <text x="1147" y="591" fill="#ccc">Z</text>
            <text x="1116" y="659" fill="#ccc">X</text>
            <text x="1043" y="569" fill="#2f9e3a">YC</text>
            <text x="1071" y="605" fill="#1450dc">ZC</text>
            <text x="1058" y="649" fill="#cc2e2e">XC</text>
          </g>

          <g transform="translate(400 800) scale(.33333)" fill="none" stroke-width="3">
            <path d="M107 246L211 214L285 241L295 360L193 394L119 365ZM211 214L221 331L119 365M221 331L295 360" stroke="#aaa" />
            <path d="M187 218L181 150H172L182 98L201 148H194L200 216Z" fill="#3cae3c" />
            <path d="M250 282L325 258L320 250L377 246L327 276L326 270L254 293Q247 290 250 282Z" fill="#0a3ae0" />
            <path d="M294 331L316 334L330 353L304 355L294 348Z" fill="#c43030" />
          </g>
          <g class="axis triad" text-anchor="middle">
            <text x="460" y="827" fill="#2f9e3a">Y</text>
            <text x="533" y="883" fill="#1440ee">Z</text>
            <text x="515" y="923" fill="#cc2e2e">X</text>
          </g>
        </svg>
      </section>
    </main>

    <footer class="status"></footer>
    <div class="ime">
      <svg class="logo" width="32" height="32" viewBox="0 0 32 32" v-html="icons.sogou[1]" />
      <button v-for="k in ime" :key="k" class="ico" :aria-label="k"><svg width="16" height="16" viewBox="0 0 16 16" v-html="icons[k][1]" /></button>
    </div>
    <div class="mark">CSDN @山涧果子</div>
  </div>
</template>

<style>
body { margin: 0; background: #fff; }
</style>

<style scoped>
.app { position: relative; display: flex; flex-direction: column; height: 100vh; overflow: hidden; font-family: "Noto Sans", "Noto Sans CJK SC", sans-serif; font-size: 12px; line-height: 16px; color: #222; background: #fff; }
.app *, .app *::before, .app *::after { box-sizing: border-box; }
.defs { position: absolute; width: 0; height: 0; }
svg { display: block; flex: none; overflow: visible; }
button { font: inherit; color: inherit; background: none; border: 0; padding: 0; margin: 0; white-space: nowrap; flex: none; }
h1, h2, p { margin: 0; font: inherit; }
.ico { display: block; }
.caret { display: block; flex: none; width: 6px; height: 4px; background: currentColor; clip-path: polygon(0 0, 100% 0, 50% 100%); }
.caret.big { width: 9px; height: 5px; }
.caret.flip { transform: scaleY(-1); }
.caret.light { color: #fff; }
.caret.faded { color: #2d83a4; }

.head { height: 56px; flex: none; color: #fff; background: linear-gradient(90deg, #006489, #0079a6); }
.titlebar { display: flex; align-items: center; height: 26px; padding: 0 8px 0 4px; }
.brand { width: 37px; font-size: 20px; line-height: 26px; font-weight: 700; }
.qsep { width: 1px; height: 18px; margin-right: 5px; background: #004c69; flex: none; }
.qsep.first { margin-right: 9px; }
.titlebar > .ico { margin-right: 7px; }
.titlebar > .caret { margin: 0 8px 0 1px; }
.winbtn { display: flex; align-items: center; gap: 5px; font-size: 11px; margin-left: -3px; margin-right: 8px; }
.titlebar > .caret.lined { height: 7px; margin: 0; clip-path: polygon(0 0, 100% 0, 100% 15%, 0 15%, 0 50%, 100% 50%, 50% 100%, 0 50%); }
.titlebar h1 { flex: 1; padding-left: 599px; font-size: 12px; line-height: 26px; }
.maker { font-size: 14px; font-weight: 800; line-height: 28px; margin-right: 26px; }
.titlebar > .ico.win { margin: 0; }
.titlebar > .ico.win + .ico.win { margin-left: 12px; }
.tabs { display: flex; height: 30px; font-size: 13px; }
.tabs > button { padding: 4px 11px 3px; line-height: 21px; height: 28px; }
.tabs > .file { padding-left: 20px; padding-right: 25px; }
.tabs > .on { color: #ffcf57; padding-bottom: 1px; border-bottom: 2px solid #ffc845; }
.right { margin-left: auto; display: flex; align-items: center; gap: 10px; padding: 0 6px 0 0; flex: none; }
.search { display: flex; align-items: center; width: 178px; height: 22px; background: #fff; border: 1px solid #777; padding-right: 2px; }
.search input { flex: 1; min-width: 0; border: 0; padding: 0; outline: 0; background: none; font: inherit; font-size: 12px; }
.search input::placeholder { color: #aaa; opacity: 1; }

.ribbon { position: relative; display: flex; height: 94px; flex: none; border-bottom: 1px solid #d9d9d9; font-size: 11px; z-index: 2; }
.group { display: flex; flex-direction: column; flex: none; }
.g1 { width: 108px; } .g2 { width: 174px; } .g3 { width: 225px; } .g4 { width: 366px; } .g5 { width: 203px; }
.g1 .body, .g4 .body, .g5 .body { padding-left: 8px; }
.g2 .body { padding-left: 12px; }
.g3 .body { padding-left: 6px; }
.body { display: flex; height: 76px; }
.gsep { width: 1px; margin: 5px 0 4px; background: #d4d4d4; flex: none; }
.tool { display: flex; flex-direction: column; align-items: center; height: 74px; margin-top: 2px; padding-top: 3px; }
.tool span { margin: 4px 0; }
.tool.more { width: 43px; }
.opened { position: relative; margin-left: 9px; }
.opened > .tool { background: #cfe7eb; }
.gname { position: relative; text-align: center; color: #00648c; padding-right: 16px; }
.g5 .gname { padding-right: 18px; }
.gname .caret { position: absolute; right: 8px; top: 6px; color: #222; }
.list button { display: flex; align-items: center; gap: 4px; height: 35px; }
.list { padding-top: 3px; }
.list.small { width: 62px; padding-top: 2px; }
.list.small button { height: 23px; }
.list.small .caret { margin-left: 4px; }
.list.wide { width: 99px; padding-left: 7px; }
.list.narrow { width: 58px; }
.ribbon > .corner, .bar > .corner { margin: auto 6px 8px auto; }

.menu { position: absolute; left: 0; top: 76px; width: 114px; background: #fff; border: 1px solid #a0a0a0; }
.menubody { display: flex; padding: 1px 0 1px 1px; }
.items { width: 93px; }
.items h2 { height: 23px; border-top: 1px solid #d4d4d4; color: #00648c; font-size: 13px; line-height: 22px; padding-left: 6px; }
.items button { display: flex; align-items: center; gap: 4px; width: 93px; height: 22px; padding-left: 3px; }
.items .hot { background: #d8ebf0; }
.scroll { flex: 1; display: flex; flex-direction: column; justify-content: space-between; align-items: center; padding: 6px 0; }
.grip { height: 11px; background: #dcdcdc; }
.grip::after { content: ""; display: block; width: 6px; height: 6px; margin-left: auto; margin-right: 2px; position: relative; top: 3px; background: radial-gradient(circle, #999 1px, transparent 1px) 0 0 / 3px 3px; clip-path: polygon(100% 0, 100% 100%, 0 100%); }
.tip { position: absolute; left: 91px; top: 103px; display: flex; gap: 4px; width: 213px; height: 64px; padding: 8px 0 0 8px; background: #fff; border: 1px solid #a6a6a6; font-size: 12px; }
.tip b { display: block; }
.tip p { margin-top: 6px; white-space: nowrap; }

.bar { display: flex; align-items: center; height: 28px; flex: none; border-bottom: 1px solid #a6a6a6; font-size: 11px; }
.menubtn { display: flex; align-items: center; gap: 7px; padding-left: 13px; }
.bsep { width: 1px; height: 20px; background: #ccc; margin: 0 12px 0 8px; flex: none; }
.bsep.end { margin: 0 0 0 3px; }
.pick { position: relative; height: 22px; }
.pick select { appearance: none; width: 100%; height: 22px; border: 1px solid #666; border-radius: 0; background: #fff; padding: 0 2px; font: inherit; color: inherit; }
.pick .caret { position: absolute; right: 4px; top: 9px; }
.p1 { width: 149px; }
.p2 { width: 156px; margin-right: 8px; }
.bar .ico { margin-right: 9px; }
.p1 + .ico { margin-left: 9px; }
.bar .ico.gap { margin-left: 10px; }

.main { display: flex; flex: 1; min-height: 0; }
.rail { display: flex; flex-direction: column; width: 37px; flex: none; background: #dcdcdc; border-right: 1px solid #a6a6a6; }
.rail button { display: grid; place-items: center; width: 34px; height: 44px; margin-left: 3px; }
.rail button:first-child { height: 30px; margin-bottom: 3px; margin-left: 1px; }
.rail .on { background: #fff; border: 1px solid #a6a6a6; border-right: 0; }
.panel { display: flex; flex-direction: column; width: 323px; flex: none; border-right: 1px solid #a6a6a6; padding: 0 9px 6px 8px; }
.ptitle { display: flex; align-items: center; gap: 4px; height: 27px; flex: none; font-weight: 500; color: #111; margin-left: -2px; padding-bottom: 2px; }
.max { width: 12px; height: 11px; margin: 0 2px 0 auto; border: 1px solid #000; border-top-width: 2px; }
.treebox { display: flex; flex-direction: column; flex: 1; min-height: 0; border: 1px solid #d0d0d0; }
.treeclip { flex: 1; min-height: 0; overflow: hidden; }
.tree { width: 100%; table-layout: fixed; border-collapse: separate; border-spacing: 0; }
.c1 { width: 196px; } .c2 { width: 24px; }
.tree th { height: 21px; padding: 1px 0 0 6px; text-align: left; font-weight: 400; background: #efefef; border-bottom: 1px solid #ccc; border-right: 1px solid #d6d6d6; line-height: 19px; }
.tree th .caret { display: inline-block; margin-left: 17px; vertical-align: 2px; }
.tree td { height: 20px; padding: 0; border-bottom: 1px solid #e8e8e8; border-right: 1px solid #e8e8e8; }
.tree tr > :last-child { border-right: 0; }
.tree tbody tr:nth-child(even) { background: #f9f9f9; }
.tree .mid { text-align: center; padding-left: 0; }
.mid svg { margin: 0 auto; }
.node { display: flex; align-items: center; height: 19px; overflow: hidden; }
.node span { margin-left: 4px; white-space: nowrap; }
.dim span { color: #999; }
.bold span { font-weight: 700; }
.hscroll { height: 16px; flex: none; background: #efefef; padding: 7px 50px 0 17px; }
.hscroll i { display: block; height: 2px; background: #868686; }
.split { height: 6px; flex: none; margin: 2px 0; background: #dcdcdc; border: 1px solid #a6a6a6; }
.sect { display: flex; align-items: center; gap: 9px; height: 24px; padding: 4px 0 0 10px; border-bottom: 2px solid #d0d0d0; color: #00648c; font-size: 14px; }
.sect i { width: 5px; height: 8px; background: #00648c; clip-path: polygon(0 0, 100% 50%, 0 100%); }

.work { display: flex; flex-direction: column; flex: 1; min-width: 0; border-right: 1px solid #ddd; }
.doctabs { display: flex; height: 27px; flex: none; border-bottom: 2px solid #005f87; }
.doc { display: flex; align-items: center; gap: 3px; width: 134px; height: 27px; padding: 0 0 2px 7px; color: #fff; background: #005f87; }
.doc .x { margin-left: 5px; }
.scene { flex: 1; min-height: 0; width: 100%; overflow: hidden; }
.axis { font-family: "Liberation Sans", sans-serif; font-size: 14px; }
.triad { font-size: 12px; }

.status { height: 25px; flex: none; border-top: 1px solid #a6a6a6; border-bottom: 2px solid #c9efeb; box-shadow: inset 0 -1px #a9bfc0; }
.ime { position: absolute; left: 1165px; bottom: 3px; display: flex; align-items: center; gap: 8px; height: 26px; width: 216px; padding-left: 26px; background: #fff; border: 1px solid #a9c5e6; z-index: 3; }
.ime .logo { position: absolute; left: -11px; top: -6px; }
.mark { position: absolute; right: 5px; bottom: 10px; font-size: 37px; line-height: 44px; color: #dedede; text-shadow: 1px 1px 1px #888; z-index: 4; }
</style>
